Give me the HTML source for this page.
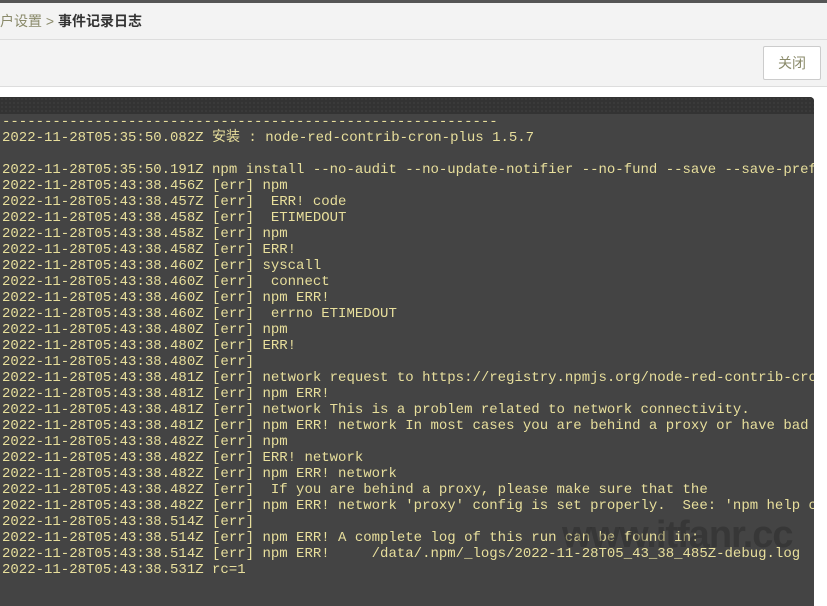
<!DOCTYPE html>
<html><head><meta charset="utf-8"><style>
*{margin:0;padding:0;box-sizing:border-box}
body{width:827px;height:606px;overflow:hidden;background:#fff;font-family:"Liberation Sans","Noto Sans CJK SC",sans-serif;position:relative}
.top{position:absolute;left:0;top:0;width:827px;height:3px;background:#555}
.hdr{position:absolute;left:0;top:3px;width:827px;height:37px;background:#f3f3f3;border-bottom:1px solid #ddd;font-size:14px;line-height:36px;color:#333}
.hdr .a{color:#8a8a6a}
.hdr b{font-weight:bold;color:#333}
.bar{position:absolute;left:0;top:40px;width:827px;height:47px;background:#f3f3f3;border-bottom:1px solid #ddd}
.btn{position:absolute;left:763px;top:6px;width:58px;height:34px;background:#fff;border:1px solid #ccc;border-radius:2px;font-size:14px;color:#8a8a6a;text-align:center;line-height:32px}
.panel{position:absolute;left:0;top:97px;width:814px;height:509px;background:#444;border-top-right-radius:4px;overflow:hidden}
.strip{height:17px;background:#333;background-image:radial-gradient(#3d3d3d 1px,transparent 1px);background-size:4px 4px}
pre{position:absolute;left:2px;top:17px;font-family:"Liberation Mono","Noto Sans CJK SC",monospace;font-size:14px;line-height:16px;color:#e8df9c;white-space:pre}
.wm{position:absolute;left:562px;top:514px;font-size:38px;font-weight:bold;color:rgba(40,40,40,0.45);font-family:"Liberation Sans",sans-serif;letter-spacing:-1px}
</style></head><body>
<div class="top"></div>
<div class="hdr"><span class="a">户设置 &gt; </span><b>事件记录日志</b></div>
<div class="bar"><div class="btn">关闭</div></div>
<div class="panel"><div class="strip"></div>
<pre>-----------------------------------------------------------
2022-11-28T05:35:50.082Z 安装 : node-red-contrib-cron-plus 1.5.7

2022-11-28T05:35:50.191Z npm install --no-audit --no-update-notifier --no-fund --save --save-prefix=~
2022-11-28T05:43:38.456Z [err] npm
2022-11-28T05:43:38.457Z [err]  ERR! code
2022-11-28T05:43:38.458Z [err]  ETIMEDOUT
2022-11-28T05:43:38.458Z [err] npm
2022-11-28T05:43:38.458Z [err] ERR!
2022-11-28T05:43:38.460Z [err] syscall
2022-11-28T05:43:38.460Z [err]  connect
2022-11-28T05:43:38.460Z [err] npm ERR!
2022-11-28T05:43:38.460Z [err]  errno ETIMEDOUT
2022-11-28T05:43:38.480Z [err] npm
2022-11-28T05:43:38.480Z [err] ERR!
2022-11-28T05:43:38.480Z [err]
2022-11-28T05:43:38.481Z [err] network request to https://registry.npmjs.org/node-red-contrib-cron
2022-11-28T05:43:38.481Z [err] npm ERR!
2022-11-28T05:43:38.481Z [err] network This is a problem related to network connectivity.
2022-11-28T05:43:38.481Z [err] npm ERR! network In most cases you are behind a proxy or have bad
2022-11-28T05:43:38.482Z [err] npm
2022-11-28T05:43:38.482Z [err] ERR! network
2022-11-28T05:43:38.482Z [err] npm ERR! network
2022-11-28T05:43:38.482Z [err]  If you are behind a proxy, please make sure that the
2022-11-28T05:43:38.482Z [err] npm ERR! network 'proxy' config is set properly.  See: 'npm help c
2022-11-28T05:43:38.514Z [err]
2022-11-28T05:43:38.514Z [err] npm ERR! A complete log of this run can be found in:
2022-11-28T05:43:38.514Z [err] npm ERR!     /data/.npm/_logs/2022-11-28T05_43_38_485Z-debug.log
2022-11-28T05:43:38.531Z rc=1</pre>
</div>
<div class="wm">www.itfanr.cc</div>
</body></html>
